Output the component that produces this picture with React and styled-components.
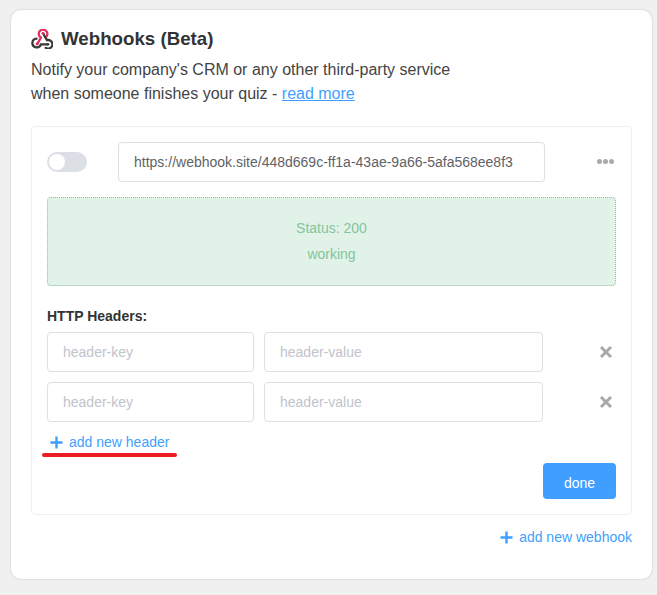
import React from 'react'
import styled, { createGlobalStyle } from 'styled-components'

const Global = createGlobalStyle`
  html, body { margin: 0; padding: 0; background: #f0f0f0; }
  body { font-family: "Liberation Sans", Arial, sans-serif; color: #333; width: 657px; height: 595px; overflow: hidden; }
  * { box-sizing: border-box; }
`

const Page = styled.div`
  padding: 10px 5px 0 11px;
`

const Card = styled.section`
  width: 641px;
  height: 569px;
  background: #fff;
  border-radius: 10px;
  box-shadow: 0 0 2px rgba(0, 0, 0, 0.22);
  padding: 17px 20px 0;
`

const Title = styled.h2`
  display: flex;
  align-items: center;
  gap: 8px;
  margin: 0;
  height: 24px;
  font-size: 18.72px;
  font-weight: 700;
  color: #333;
`

const Intro = styled.p`
  margin: 7px 0 0;
  font-size: 16px;
  line-height: 24px;
  color: #444;
`

const ReadMore = styled.a`
  color: #3f9fff;
  text-decoration: underline;
`

const Panel = styled.div`
  margin-top: 20px;
  height: 389px;
  border: 1px solid #eeeef0;
  border-radius: 4px;
  padding: 15px 15px 0;
`

const TopRow = styled.div`
  display: flex;
  align-items: center;
  height: 40px;
`

const Toggle = styled.div`
  width: 40px;
  height: 20px;
  border-radius: 10px;
  background: #dcdfe6;
  padding: 2px;
  margin-right: 31px;
  &::before {
    content: '';
    display: block;
    width: 16px;
    height: 16px;
    border-radius: 50%;
    background: #fff;
  }
`

const Input = styled.div`
  width: ${p => p.$w}px;
  height: 40px;
  flex: none;
  display: flex;
  align-items: center;
  padding: 0 15px;
  border: 1px solid #dcdfe6;
  border-radius: 4px;
  font-size: 14px;
  background: #fff;
  color: ${p => (p.$placeholder ? '#c0c4cc' : '#606266')};
`

const More = styled.div`
  margin-left: 52px;
  display: flex;
  gap: 1px;
  margin-top: -2px;
`

const Dot = styled.span`
  width: 5px;
  height: 5px;
  border-radius: 50%;
  background: #a9a9ad;
`

const Status = styled.div`
  margin-top: 15px;
  width: 569px;
  height: 89px;
  background: #e1f3e8;
  border: 1px dotted #85c49c;
  border-radius: 4px;
  padding-top: 17px;
  text-align: center;
  font-size: 14px;
  line-height: 26px;
  color: #85c49c;
`

const Label = styled.div`
  margin-top: 22px;
  font-size: 14px;
  line-height: 16px;
  font-weight: 700;
  color: #333;
`

const HeaderRows = styled.div`
  margin-top: 8px;
  display: grid;
  gap: 10px;
`

const HeaderRow = styled.div`
  display: flex;
  align-items: center;
  gap: 10px;
`

const Remove = styled.svg`
  margin-left: 42px;
  width: 22px;
  height: 22px;
  flex: none;
`

const AddLink = styled.a`
  position: relative;
  display: inline-flex;
  align-items: center;
  gap: 6px;
  color: #3f9fff;
  font-size: 14px;
  line-height: 20px;
`

const Underline = styled.span`
  position: absolute;
  left: -8px;
  top: 21px;
  width: 135px;
  height: 4px;
  border-radius: 2px;
  background: #ec1c24;
`

const AddHeaderRow = styled.div`
  margin-top: 10px;
  padding-left: 3px;
  height: 20px;
`

const DoneRow = styled.div`
  display: flex;
  justify-content: flex-end;
  margin-top: 11px;
  width: 569px;
`

const Done = styled.button`
  width: 73px;
  height: 36px;
  border: 0;
  border-radius: 4px;
  background: #409eff;
  color: #fff;
  font: 14px "Liberation Sans", Arial, sans-serif;
  padding: 4px 0 0;
`

const Footer = styled.div`
  display: flex;
  justify-content: flex-end;
  margin-top: 12px;
`

const Plus = () => (
  <svg width="13" height="13" viewBox="0 0 13 13">
    <path d="M6.5 0.5v12M0.5 6.5h12" stroke="#3f9fff" strokeWidth="2.4" fill="none" />
  </svg>
)

const WebhookIcon = () => (
  <svg width="22" height="20" viewBox="0 0 24 22" fill="none" strokeWidth="2.5">
    <path d="M7.400 15.500 10.800 9.400a4.700 4.700 0 1 1 6.400-1.600" stroke="#e0305f" strokeLinecap="round" />
    <path d="M6 10.600a4.800 4.800 0 1 0 4.800 6.300H18" stroke="#3a3a3a" strokeLinecap="round" />
    <path d="M13.200 5 17.500 12.300a4.700 4.700 0 1 1 1 9.200c-.9 0-1.700-.3-2.400-.7" stroke="#3a3a3a" strokeLinecap="round" />
    <circle cx="13.200" cy="4.800" r="1.600" fill="#e0305f" stroke="none" />
    <circle cx="6.600" cy="16.500" r="1.600" fill="#e0305f" stroke="none" />
    <circle cx="18.500" cy="16.900" r="1.600" fill="#3a3a3a" stroke="none" />
  </svg>
)

const Cross = () => (
  <Remove viewBox="0 0 22 22">
    <path d="M6 6l10 10M16 6 6 16" stroke="#a9a9a9" strokeWidth="3" fill="none" />
  </Remove>
)

const App = () => {
  return (
    <Page>
      <Global />
      <Card>
        <Title>
          <WebhookIcon />
          Webhooks (Beta)
        </Title>
        <Intro>
          Notify your company's CRM or any other third-party service
          <br />
          when someone finishes your quiz - <ReadMore href="#">read more</ReadMore>
        </Intro>
        <Panel>
          <TopRow>
            <Toggle />
            <Input $w={427}>https://webhook.site/448d669c-ff1a-43ae-9a66-5afa568ee8f3</Input>
            <More>
              <Dot />
              <Dot />
              <Dot />
            </More>
          </TopRow>
          <Status>
            Status: 200
            <br />
            working
          </Status>
          <Label>HTTP Headers:</Label>
          <HeaderRows>
            {[0, 1].map(i => (
              <HeaderRow key={i}>
                <Input $w={207} $placeholder>header-key</Input>
                <Input $w={279} $placeholder>header-value</Input>
                <Cross />
              </HeaderRow>
            ))}
          </HeaderRows>
          <AddHeaderRow>
            <AddLink>
              <Plus />
              add new header
              <Underline />
            </AddLink>
          </AddHeaderRow>
          <DoneRow>
            <Done>done</Done>
          </DoneRow>
        </Panel>
        <Footer>
          <AddLink>
            <Plus />
            add new webhook
          </AddLink>
        </Footer>
      </Card>
    </Page>
  )
}

export default App
